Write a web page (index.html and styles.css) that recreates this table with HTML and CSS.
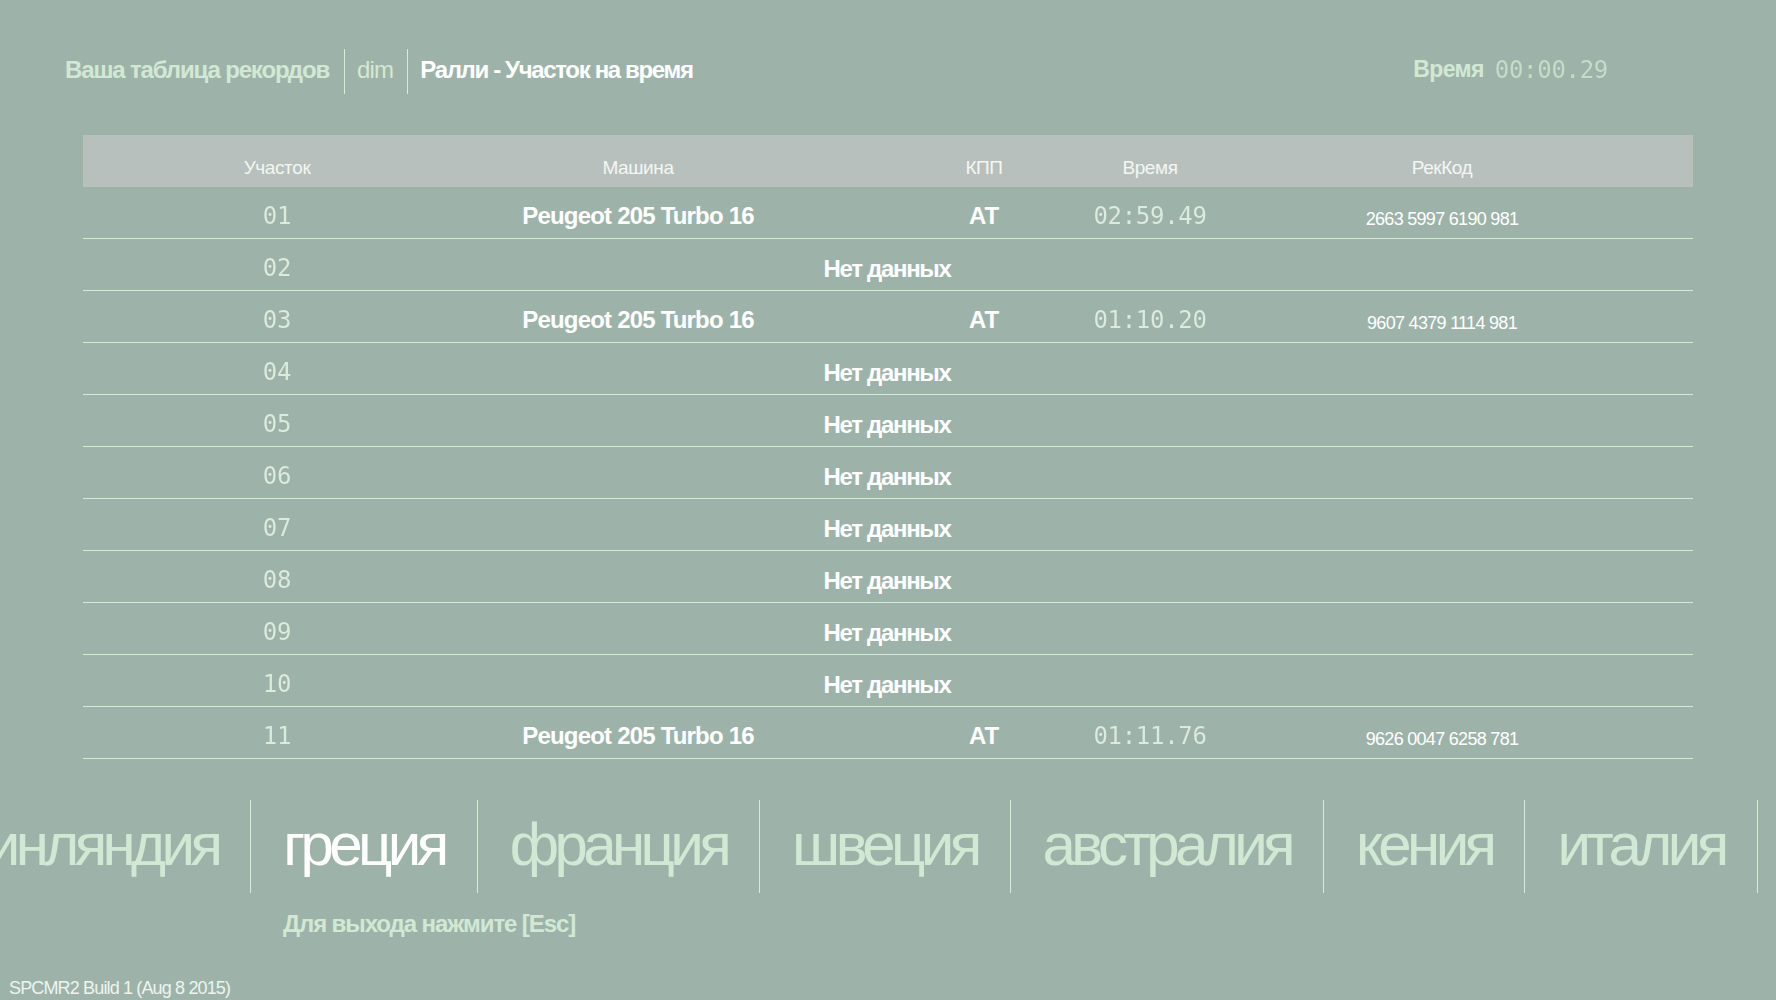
FILE: index.html
```html
<!DOCTYPE html>
<html lang="ru">
<head>
<meta charset="utf-8">
<title>Ваша таблица рекордов</title>
<link rel="stylesheet" href="styles.css">
</head>
<body>
<div class="screen">
  <header class="topbar">
    <div class="crumbs">
      <span class="crumb crumb-dim">Ваша таблица рекордов</span>
      <span class="crumb crumb-dim crumb-user">dim</span>
      <span class="crumb crumb-active">Ралли - Участок на время</span>
    </div>
    <div class="clock">
      <span class="clock-label">Время</span>
      <span class="dots clock-value">00:00.29</span>
    </div>
  </header>

  <section class="records">
    <div class="row head">
      <span class="c c1">Участок</span>
      <span class="c c2">Машина</span>
      <span class="c c3">КПП</span>
      <span class="c c4">Время</span>
      <span class="c c5">РекКод</span>
    </div>
    <div class="row">
      <span class="c c1 dots num">01</span>
      <span class="c c2 car">Peugeot 205 Turbo 16</span>
      <span class="c c3 gear">AT</span>
      <span class="c c4 dots time">02:59.49</span>
      <span class="c c5 code">2663 5997 6190 981</span>
    </div>
    <div class="row">
      <span class="c c1 dots num">02</span>
      <span class="c nodata">Нет данных</span>
    </div>
    <div class="row">
      <span class="c c1 dots num">03</span>
      <span class="c c2 car">Peugeot 205 Turbo 16</span>
      <span class="c c3 gear">AT</span>
      <span class="c c4 dots time">01:10.20</span>
      <span class="c c5 code">9607 4379 1114 981</span>
    </div>
    <div class="row">
      <span class="c c1 dots num">04</span>
      <span class="c nodata">Нет данных</span>
    </div>
    <div class="row">
      <span class="c c1 dots num">05</span>
      <span class="c nodata">Нет данных</span>
    </div>
    <div class="row">
      <span class="c c1 dots num">06</span>
      <span class="c nodata">Нет данных</span>
    </div>
    <div class="row">
      <span class="c c1 dots num">07</span>
      <span class="c nodata">Нет данных</span>
    </div>
    <div class="row">
      <span class="c c1 dots num">08</span>
      <span class="c nodata">Нет данных</span>
    </div>
    <div class="row">
      <span class="c c1 dots num">09</span>
      <span class="c nodata">Нет данных</span>
    </div>
    <div class="row">
      <span class="c c1 dots num">10</span>
      <span class="c nodata">Нет данных</span>
    </div>
    <div class="row">
      <span class="c c1 dots num">11</span>
      <span class="c c2 car">Peugeot 205 Turbo 16</span>
      <span class="c c3 gear">AT</span>
      <span class="c c4 dots time">01:11.76</span>
      <span class="c c5 code">9626 0047 6258 781</span>
    </div>
  </section>

  <nav class="countries">
    <div class="strip">
      <span class="country">финляндия</span>
      <span class="country current">греция</span>
      <span class="country">франция</span>
      <span class="country">швеция</span>
      <span class="country">австралия</span>
      <span class="country">кения</span>
      <span class="country">италия</span>
      <span class="country">англия</span>
    </div>
  </nav>

  <p class="hint">Для выхода нажмите [Esc]</p>

  <footer class="build">SPCMR2 Build 1 (Aug 8 2015)</footer>
</div>
</body>
</html>
```

FILE: styles.css
```css
html, body {
  margin: 0;
  padding: 0;
  background: #9db3aa;
}

body {
  width: 1776px;
  height: 1000px;
  overflow: hidden;
  font-family: "Liberation Sans", Arial, sans-serif;
  color: #ffffff;
}

.screen {
  display: flex;
  flex-direction: column;
  height: 1000px;
}

/* ---------- top bar ---------- */
.topbar {
  display: flex;
  align-items: center;
  justify-content: space-between;
  height: 45px;
  margin-top: 49px;
  padding-left: 65px;
  padding-right: 168px;
}

.crumbs {
  display: flex;
  align-items: stretch;
  height: 45px;
}

.crumb {
  display: flex;
  align-items: center;
  padding-bottom: 4px;
  font-size: 24px;
  font-weight: bold;
  letter-spacing: -1.15px;
  white-space: nowrap;
}

.crumb-dim {
  color: #d3e8d4;
}

.crumb:first-child {
  padding-right: 15px;
  border-right: 1px solid #d8ead8;
}

.crumb-user {
  padding-left: 12px;
  padding-right: 14px;
  border-right: 1px solid #d8ead8;
  font-weight: normal;
  letter-spacing: -0.8px;
}

.crumb-active {
  padding-left: 12px;
  color: #ffffff;
  letter-spacing: -1.35px;
}

.clock {
  display: flex;
  align-items: center;
  gap: 11px;
  padding-bottom: 4px;
}

.clock-label {
  font-size: 23px;
  font-weight: bold;
  letter-spacing: -0.6px;
  color: #d3e8d4;
}

/* dot-matrix digits */
.dots {
  font-family: "DejaVu Sans Mono", "Liberation Mono", monospace;
  font-size: 24px;
  letter-spacing: -0.3px;
  font-variant-numeric: slashed-zero;
  color: transparent;
  background-image: radial-gradient(circle, #dcebdc 0.9px, transparent 1.3px);
  background-size: 2px 2px;
  -webkit-background-clip: text;
  background-clip: text;
}

.clock-value {
  background-image: radial-gradient(circle, #c6dcc8 0.9px, transparent 1.3px);
}

/* ---------- table ---------- */
.records {
  margin: 41px 83px 0;
  width: 1610px;
}

.row {
  display: flex;
  align-items: center;
  height: 51px;
  border-bottom: 1px solid #d6ead8;
}

.row.head {
  height: 52px;
  border-bottom: none;
  background: #b8c0bd;
  align-items: flex-end;
  box-sizing: border-box;
}

.row.head .c {
  font-size: 19px;
  letter-spacing: -0.4px;
  color: #f4f6f4;
  padding-bottom: 8px;
}

.c {
  display: block;
  text-align: center;
  white-space: nowrap;
}

.c1 { width: 388px; }
.c2 { width: 334px; }
.c3 { width: 198px; margin-left: 80px; }
.c4 { width: 134px; }
.c5 { width: 450px; }

.nodata {
  width: 832px;
  font-size: 24px;
  font-weight: bold;
  letter-spacing: -1.3px;
  padding-top: 8px;
}

.num {
  padding-top: 7px;
}

.car {
  font-size: 24px;
  font-weight: bold;
  letter-spacing: -0.8px;
  padding-top: 7px;
}

.gear {
  font-size: 24px;
  font-weight: bold;
  padding-top: 7px;
}

.time {
  padding-top: 7px;
}

.code {
  font-size: 18px;
  letter-spacing: -0.7px;
  padding-top: 13px;
}

/* ---------- countries ---------- */
.countries {
  margin-top: 41px;
  height: 93px;
  overflow: hidden;
}

.strip {
  display: flex;
  height: 93px;
  margin-left: -90px;
}

.country {
  display: flex;
  align-items: center;
  padding: 0 32px 4px;
  border-right: 1px solid #d8ead8;
  font-size: 60px;
  letter-spacing: -4.6px;
  color: #d3e8d4;
  white-space: nowrap;
}

.country.current {
  color: #ffffff;
}

/* ---------- bottom ---------- */
.hint {
  margin: 17px 0 0 283px;
  font-size: 24px;
  font-weight: bold;
  letter-spacing: -1.1px;
  color: #d3e8d4;
}

.build {
  margin-top: auto;
  margin-bottom: 1px;
  padding-left: 9px;
  font-size: 18px;
  letter-spacing: -0.85px;
  color: #eef4ee;
  line-height: 22px;
}
```
